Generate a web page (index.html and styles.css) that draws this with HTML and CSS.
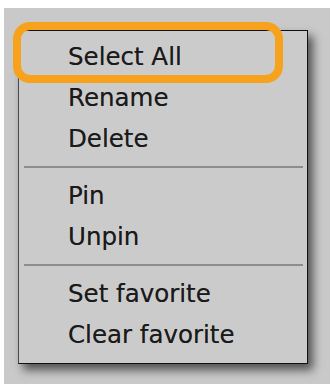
FILE: index.html
```html
<!DOCTYPE html>
<html>
<head>
<meta charset="utf-8">
<link rel="stylesheet" href="styles.css">
</head>
<body>
<div class="panel">
  <div class="menu">
    <div class="item">Select All</div>
    <div class="item">Rename</div>
    <div class="item">Delete</div>
    <div class="sep"></div>
    <div class="item">Pin</div>
    <div class="item">Unpin</div>
    <div class="sep"></div>
    <div class="item">Set favorite</div>
    <div class="item">Clear favorite</div>
  </div>
  <div class="highlight"></div>
</div>
</body>
</html>
```
FILE: styles.css
```css
html, body {
  margin: 0;
  padding: 0;
  background: #ffffff;
}
.panel {
  position: relative;
  margin: 8px 4px 0 4px;
  height: 376px;
  background: #c9c9c9;
  padding: 22px 0 0 14px;
  box-sizing: border-box;
}
.menu {
  width: 290px;
  height: 334px;
  box-sizing: border-box;
  background: #cbcbcb;
  border: 1px solid #111111;
  border-left-color: #4a4a4a;
  box-shadow: 5px 6px 9px rgba(0, 0, 0, 0.6);
  padding: 5px 0 7px 0;
  font-family: "DejaVu Sans", Verdana, sans-serif;
  font-size: 24.5px;
  color: #1a1a1a;
  text-shadow: 0 0 0.6px rgba(0, 0, 0, 0.5);
}
.item {
  height: 41px;
  line-height: 41px;
  padding-left: 49px;
  white-space: nowrap;
}
.sep {
  height: 16px;
  display: flex;
  align-items: center;
  padding: 0 4px 0 5px;
}
.sep::before {
  content: "";
  flex: 1;
  height: 2px;
  background: #8c8c8c;
}
.highlight {
  position: absolute;
  left: 9px;
  top: 14px;
  width: 270px;
  height: 61px;
  box-sizing: border-box;
  border: 8px solid #f6a21c;
  border-radius: 17px;
}
```
